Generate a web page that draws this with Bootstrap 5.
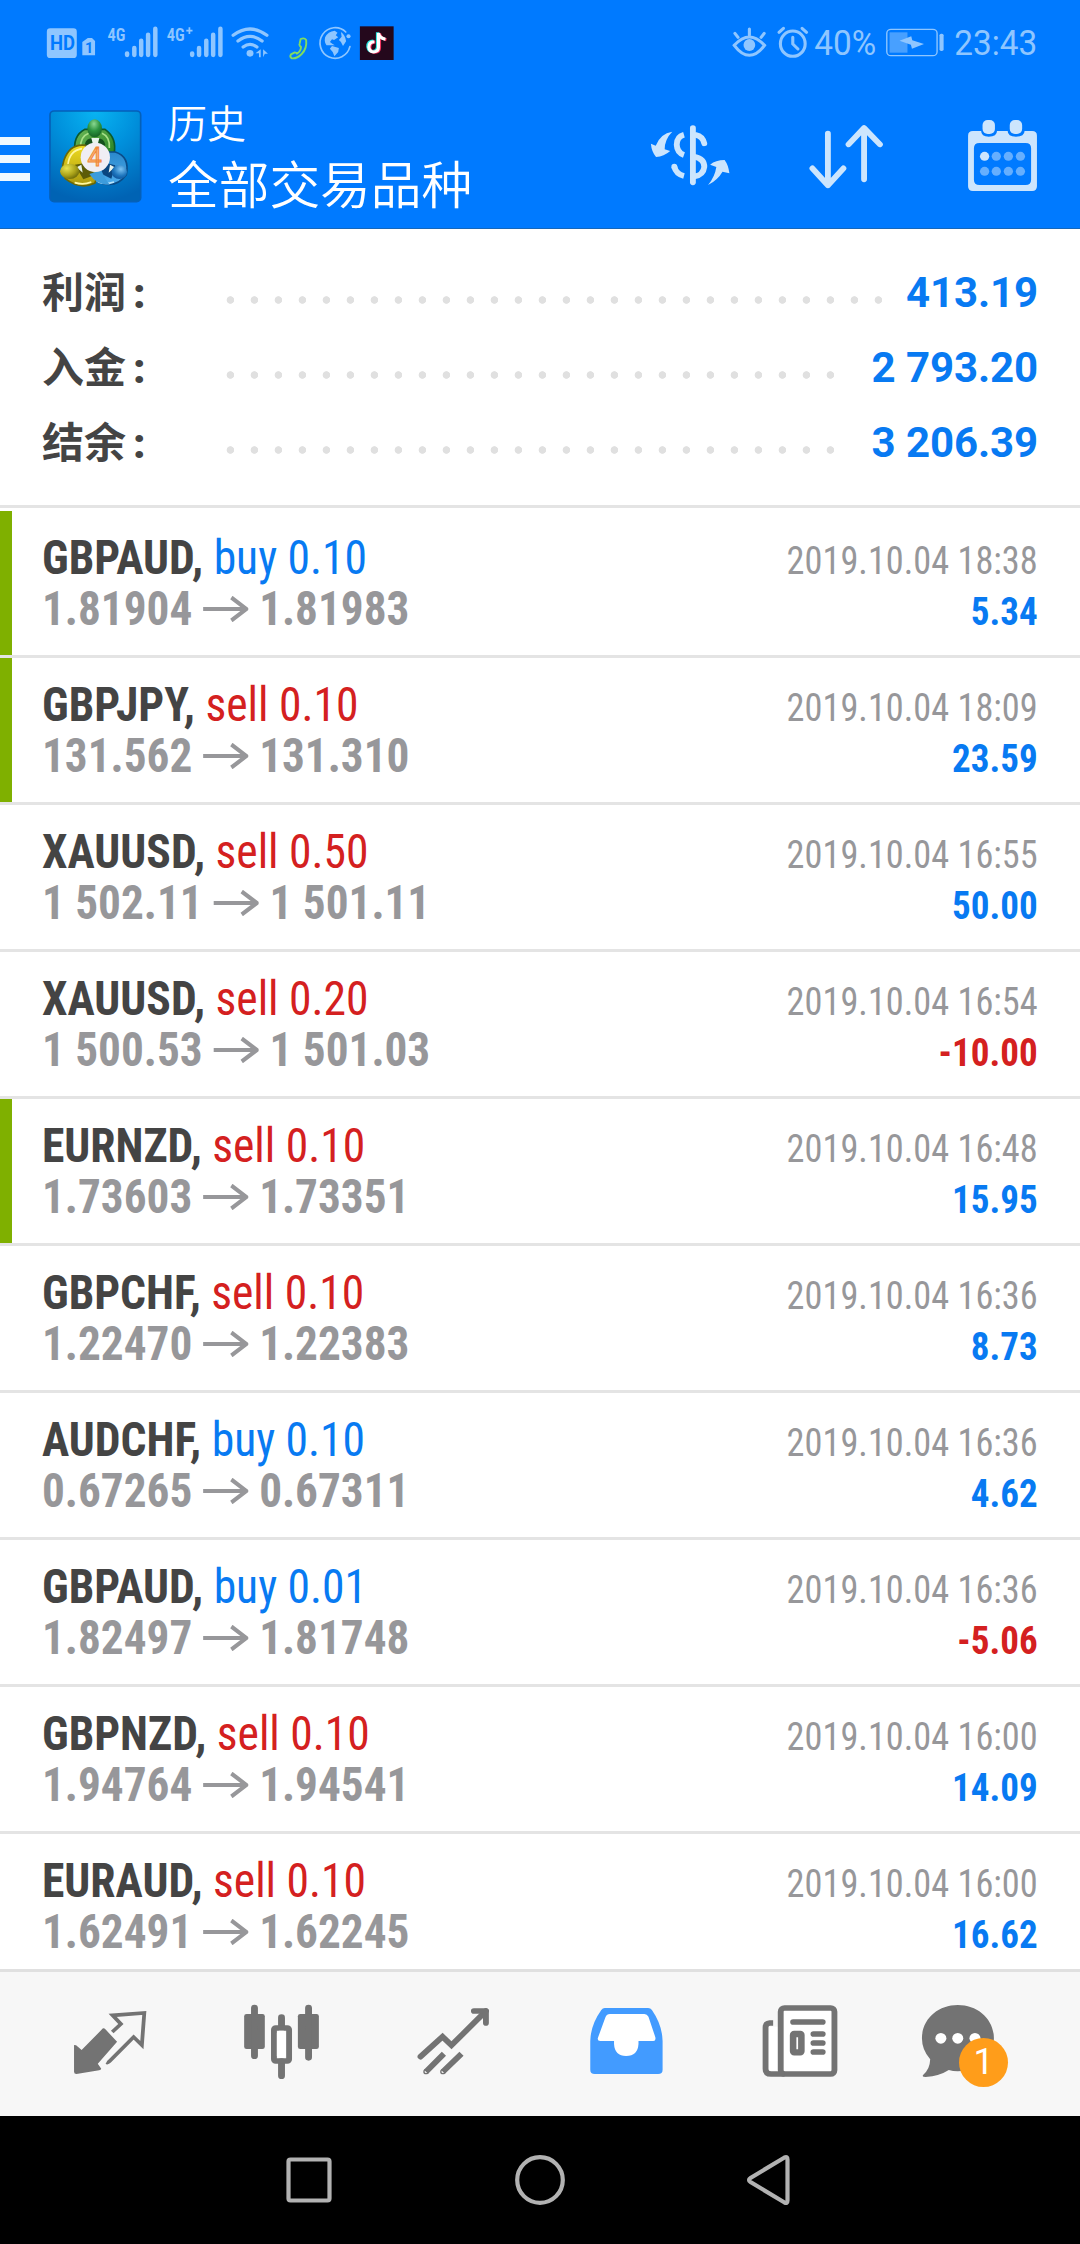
<!DOCTYPE html>
<html lang="zh-CN">
<head>
<meta charset="utf-8">
<meta name="viewport" content="width=device-width, initial-scale=1">
<title>历史</title>
<link rel="stylesheet" href="https://cdn.jsdelivr.net/npm/bootstrap@5.3.0/dist/css/bootstrap.min.css">
<style>
  body { font-family: Roboto, "Noto Sans CJK SC", sans-serif; background: #fff; }
  svg { display: block; flex: none; }
  .phone { width: 1080px; height: 2244px; }

  /* header */
  .topbar { background: #007aff; height: 229px; border-bottom: 1px solid #1667ba; }
  .statusbar { height: 72px; color: #8fc6ff; }
  .titles { color: #fff; font-family: "Noto Sans CJK SC", sans-serif; font-weight: 350; margin-left: 23px; padding-top: 26px; }
  .title-small { font-size: 39px; line-height: 46px; }
  .title-big { font-size: 50.700px; line-height: 60px; padding-top: 8px; }

  /* account summary */
  .summary { padding: 26px 42px 25px; border-bottom: 3px solid #e4e4e4; }
  .sum-line { height: 75px; line-height: 75px; font-size: 42px; font-weight: 700; }
  .sum-label { color: #444; width: 176px; font-family: "Noto Sans CJK SC", sans-serif; height: 77px; margin-top: -5px; }
  .sum-colon { font-family: Roboto, sans-serif; font-weight: 900; margin-left: 7px; }
  .sum-value { color: #087af2; letter-spacing: -.1px; }
  .dots { height: 8px; margin-top: 15px; width: calc(var(--n) * 24px);
          background: radial-gradient(circle at 12.4px 4px, #e0e0e0 3.4px, transparent 4.1px) 0 0 / 24px 8px; }

  /* deals */
  .deals { font-family: "Roboto Condensed", Roboto, sans-serif; padding-top: 3px; }
  .deal { height: 147px; padding: 21px 42px 0; position: relative; border-bottom: 3px solid #e4e4e4; }
  .deal.closed-tp::before { content: ""; position: absolute; left: 0; top: 0; width: 12px; height: 144px; background: #7fb000; }
  .deal-main { font-size: 48px; line-height: 51px; }
  .deal-main > div { transform: scaleX(.949); transform-origin: left; }
  .deal-main > .prices { transform: scaleX(.942); }
  .sym { color: #444; font-weight: 700; }
  .prices { color: #97979a; font-weight: 700; }
  .prices svg { margin: 0 12px 0 11px; }
  .deal-side { font-size: 39px; line-height: 51px; padding-top: 4px; color: #97979a; }
  .deal-side > div { transform: scaleX(.931); transform-origin: right; }
  .deal-side > .side-val { font-weight: 700; transform: scaleX(.95); }
  .c-buy { color: #087af2; }
  .c-sell { color: #d42020; }

  /* bottom */
  .tabs { height: 147px; background: #f7f7f7; border-top: 3px solid #e0e0e0; color: #737373; }
  .tabs a { color: inherit; width: 180px; }
  .count { position: absolute; left: 59px; top: 66px; width: 49px; height: 49px; line-height: 49px; font-size: 36px;
           background: #ff9d1a; border-radius: 50%; color: #fff; text-align: center; }
  .sysnav { height: 128px; background: #000; }
</style>
</head>
<body>
<div class="phone d-flex flex-column overflow-hidden">

  <header class="topbar flex-shrink-0">
    <div class="statusbar d-flex">
      <svg width="540" height="72" viewBox="0 0 1568 216" preserveAspectRatio="none" fill="currentColor" stroke="none">
        <!-- HD and SIM -->
        <rect x="136" y="85" width="87" height="89" rx="10"/>
        <text transform="translate(145 151) scale(2.9 3)" font-size="20.5" font-weight="700" textLength="25" lengthAdjust="spacingAndGlyphs" fill="#007aff">HD</text>
        <path d="M239 126l16-12h12l9 9v43h-37z"/>
        <text transform="translate(247 160) scale(2.9 3)" font-size="14.5" font-weight="700" fill="#007aff">1</text>
        <!-- signal bars -->
        <text transform="translate(312 122) scale(2.9 3)" font-size="19" font-weight="600" font-family="Roboto Condensed" textLength="18" lengthAdjust="spacingAndGlyphs">4G</text>
        <g stroke="currentColor" stroke-width="13" stroke-linecap="round">
          <path d="M369 160v5M390 144v21M410 122v43M430 104v61M451 86v79"/>
          <path d="M558 160v5M578 144v21M599 122v43M619 104v61M640 86v79"/>
        </g>
        <text transform="translate(484 122) scale(2.9 3)" font-size="19" font-weight="600" font-family="Roboto Condensed" textLength="18" lengthAdjust="spacingAndGlyphs">4G</text>
        <path d="M541 92h18M550 82v20" stroke="currentColor" stroke-width="5"/>
        <!-- wifi -->
        <g fill="none" stroke="currentColor" stroke-width="9.500" stroke-linecap="round">
          <path d="M677 106Q726 68 775 106M691 123Q726 95 761 123M706 141Q726 125 746 141"/>
        </g>
        <ellipse cx="726" cy="160" rx="10" ry="10"/>
        <path d="M757 148v24h-5v-12h-10zM764 172v-24l14 13h-9z"/>
        <!-- phone -->
        <path d="M873 117Q884 112 889 120Q892 145 876 162Q862 177 847 175Q840 170 845 163L856 157Q862 158 862 161Q874 154 874 141L871 138Q868 134 870 131Z" fill="none" stroke="#7fdc62" stroke-width="5.500" stroke-linejoin="round"/>
        <!-- globe -->
        <path d="M1004 96A44 46 0 1 0 1016 140" fill="none" stroke="currentColor" stroke-width="5" stroke-linecap="round"/>
        <circle cx="1012" cy="109" r="6"/>
        <path d="M944 112Q952 94 972 92L980 98L975 106L982 112L970 120L964 118L958 126L966 132L972 136H948Q941 126 944 112ZM964 138L984 144L982 156L971 169L966 156L958 146ZM990 96Q1003 106 1005 124L996 138L990 126L984 120L992 110Z"/>
        <!-- music note app -->
        <rect x="1045" y="79" width="98" height="101" fill="#24081c"/>
        <g fill="none" stroke-width="9">
          <path d="M1086 124Q1070 124 1070 141Q1072 155 1084 155Q1098 154 1098 141V98Q1100 113 1118 117" stroke="#25e8e0" transform="translate(-2 -1)"/>
          <path d="M1086 124Q1070 124 1070 141Q1072 155 1084 155Q1098 154 1098 141V98Q1100 113 1118 117" stroke="#f2315d" transform="translate(4 2)"/>
          <path d="M1086 124Q1070 124 1070 141Q1072 155 1084 155Q1098 154 1098 141V98Q1100 113 1118 117" stroke="#fff" transform="translate(1 1)"/>
        </g>
      </svg>
      <svg width="540" height="72" viewBox="0 0 1568 216" preserveAspectRatio="none" fill="currentColor">
        <!-- eye -->
        <g fill="none" stroke="currentColor" stroke-width="9" stroke-linecap="round">
          <path d="M564 136Q608 86 652 136Q608 196 564 136ZM608 87v18M566 100l9 12M651 100l-9 12"/>
        </g>
        <ellipse cx="608" cy="135" rx="17" ry="18"/>
        <!-- alarm -->
        <g fill="none" stroke="currentColor" stroke-width="9" stroke-linecap="round">
          <ellipse cx="734" cy="131" rx="36" ry="38"/>
          <path d="M734 112v20l15 15M694 97l13-12M774 97l-13-12"/>
        </g>
        <text transform="translate(796 164.500) scale(2.904 3)" font-size="34.500" textLength="62" lengthAdjust="spacingAndGlyphs">40%</text>
        <!-- battery -->
        <rect x="1007" y="88" width="146" height="79" rx="12" fill="none" stroke="currentColor" stroke-width="4"/>
        <rect x="1015" y="97" width="52" height="61" fill="#48a0ff"/>
        <path d="M1044 122l34-13 3 12 34 11-35 14-3-12z"/>
        <rect x="1160" y="101" width="12" height="52" rx="5"/>
        <text transform="translate(1203 164.500) scale(2.904 3)" font-size="34.500" textLength="83" lengthAdjust="spacingAndGlyphs">23:43</text>
      </svg>
    </div>

    <div class="d-flex">
      <svg width="30" height="156" viewBox="0 72 30 156" fill="#eef8ff"><path d="M0 137h30v8H0zM0 155h30v8H0zM0 173h30v8H0z"/></svg>
      <svg width="115" height="156" viewBox="0 -6 345 468">
        <defs>
          <radialGradient id="bg" cx=".5" cy="0" r="1"><stop offset="0" stop-color="#08b4f2"/><stop offset=".45" stop-color="#0090dc"/><stop offset="1" stop-color="#0063b4"/></radialGradient>
          <linearGradient id="gr" x1="0" y1="0" x2="1" y2="1"><stop offset="0" stop-color="#6cb858"/><stop offset="1" stop-color="#1d7a1c"/></linearGradient>
          <linearGradient id="ye" x1="0" y1="0" x2="0" y2="1"><stop offset="0" stop-color="#f0dc20"/><stop offset="1" stop-color="#a89810"/></linearGradient>
          <linearGradient id="bl" x1="0" y1="0" x2="0" y2="1"><stop offset="0" stop-color="#2a88cc"/><stop offset="1" stop-color="#4cacec"/></linearGradient>
          <radialGradient id="hg" cx=".45" cy=".25" r=".8"><stop offset="0" stop-color="#8ad890"/><stop offset=".5" stop-color="#2c9440"/><stop offset="1" stop-color="#125c20"/></radialGradient>
          <radialGradient id="hy" cx=".35" cy=".3" r=".8"><stop offset="0" stop-color="#e8e450"/><stop offset=".6" stop-color="#a8a018"/><stop offset="1" stop-color="#606008"/></radialGradient>
          <radialGradient id="hb" cx=".6" cy=".3" r=".8"><stop offset="0" stop-color="#7cc4f4"/><stop offset=".6" stop-color="#1c74bc"/><stop offset="1" stop-color="#0c4c94"/></radialGradient>
        </defs>
        <g transform="translate(-30 76)">
          <rect x="90" y="35" width="272" height="272" rx="12" fill="url(#bg)" stroke="#0560b8" stroke-width="5"/>
          <g transform="translate(30 0)">
            <path d="M136 164Q126 110 165 90H225Q262 116 252 164L228 190H160Z" fill="url(#gr)" stroke="#0c5a2c" stroke-width="5"/>
            <path d="M152 146Q150 112 176 102M238 146Q240 112 216 102" fill="none" stroke="#a8e088" stroke-width="5"/>
            <path d="M164 136Q170 112 194 118Q220 112 226 136L218 150H172Z" fill="#14501c"/>
            <path d="M208 158H256Q300 172 289 226Q258 268 210 250L172 222Z" fill="url(#bl)" stroke="#0a4c88" stroke-width="5"/>
            <path d="M186 232Q212 262 252 248" fill="none" stroke="#b8e4fc" stroke-width="5"/>
            <path d="M166 138Q120 132 102 182Q92 210 106 238Q148 272 194 252L210 214Z" fill="url(#ye)" stroke="#6a6808" stroke-width="5"/>
            <path d="M114 196Q118 154 156 148M134 250Q160 258 184 248" fill="none" stroke="#fff8a0" stroke-width="5"/>
            <path d="M134 196L170 190L196 226L160 240Z" fill="#5c5c08"/>
            <path d="M256 198L226 190L208 220L244 238Z" fill="#0a4680"/>
            <path d="M178 224Q200 258 240 256Q224 240 214 212Z" fill="#3c9cdc"/>
            <path d="M184 116H208L204 132H188ZM140 204l14-8 4 24ZM254 204l-14-8-4 24Z" fill="#e8f4ec"/>
            <ellipse cx="194" cy="87" rx="22" ry="27" fill="url(#hg)"/>
            <ellipse cx="119" cy="216" rx="29" ry="23" fill="url(#hy)"/>
            <ellipse cx="268" cy="218" rx="23" ry="21" fill="url(#hb)"/>
            <circle cx="196" cy="174" r="44" fill="#f0eef4"/>
            <text x="194" y="201" font-size="76" text-anchor="middle" font-family="Roboto" font-weight="400" fill="#fdb880" stroke="#f08838" stroke-width="3">4</text>
          </g>
        </g>
      </svg>
      <div class="titles flex-grow-1">
        <div class="title-small">历史</div>
        <div class="title-big">全部交易品种</div>
      </div>
      <svg width="540" height="156" viewBox="0 216 1568 468" preserveAspectRatio="none" fill="#cce5fd">
        <!-- currency refresh -->
        <g fill="none" stroke="#cce5fd" stroke-width="17" stroke-linecap="round">
          <path d="M444 384V547"/>
          <path d="M418 404Q397 410 397 434Q398 458 418 465M390 500Q395 522 418 528" stroke-linecap="butt"/>
          <path d="M390 500v1M453 405Q472 409 477 430"/>
          <path d="M448 470Q478 476 477 501Q474 526 448 529" stroke-linecap="butt"/>
        </g>
        <path d="M384 395Q350 400 336 437L322 431Q324 455 337 471Q360 470 378 453L362 448Q362 418 384 395Z"/>
        <path d="M488 555Q516 540 530 515L550 520Q547 495 536 480Q510 480 494 494L512 501Q508 530 488 555Z"/>
        <!-- sort arrows -->
        <path d="M836 401V556M791 505L836 556L881 505M941 538V384M896 433L941 384L987 433" fill="none" stroke="#cce5fd" stroke-width="17" stroke-linecap="round" stroke-linejoin="round"/>
        <!-- calendar -->
        <path fill-rule="evenodd" d="M1257 393H1281Q1281 410 1303 410Q1327 410 1327 393H1358Q1358 410 1382 410Q1407 410 1407 393H1429Q1443 393 1443 407V559Q1443 573 1429 573H1257Q1243 573 1243 559V407Q1243 393 1257 393ZM1276 429Q1260 429 1260 445V539Q1260 555 1276 555H1410Q1426 555 1426 539V445Q1426 429 1410 429Z"/>
        <rect x="1285" y="360" width="36" height="42" rx="15"/><rect x="1364" y="360" width="36" height="42" rx="15"/>
        <circle cx="1291" cy="469" r="13.500"/>
        <g fill="#66affe"><circle cx="1325" cy="469" r="13.500"/><circle cx="1360" cy="469" r="13.500"/><circle cx="1395" cy="469" r="13.500"/><circle cx="1291" cy="514" r="13.500"/><circle cx="1325" cy="514" r="13.500"/><circle cx="1360" cy="514" r="13.500"/><circle cx="1395" cy="514" r="13.500"/></g>
      </svg>
    </div>
  </header>

  <section class="summary flex-shrink-0">
    <div class="sum-line d-flex align-items-center"><span class="sum-label">利润<span class="sum-colon">:</span></span><span class="dots" style="--n:28"></span><span class="sum-value ms-auto">413.19</span></div>
    <div class="sum-line d-flex align-items-center"><span class="sum-label">入金<span class="sum-colon">:</span></span><span class="dots" style="--n:26"></span><span class="sum-value ms-auto">2 793.20</span></div>
    <div class="sum-line d-flex align-items-center"><span class="sum-label">结余<span class="sum-colon">:</span></span><span class="dots" style="--n:26"></span><span class="sum-value ms-auto">3 206.39</span></div>
  </section>

  <svg width="0" height="0" class="position-absolute"><symbol id="arrow" viewBox="0 0 48 26"><path d="M0 13H46M30 1.500L46 13L30 24.500" fill="none" stroke="#97979a" stroke-width="4.200"/></symbol></svg>

  <main class="deals flex-grow-1 overflow-hidden">
    <div class="deal closed-tp d-flex justify-content-between">
      <div class="deal-main"><div><span class="sym">GBPAUD,</span> <span class="c-buy">buy 0.10</span></div><div class="prices d-flex align-items-center">1.81904<svg width="48" height="26"><use href="#arrow"/></svg>1.81983</div></div>
      <div class="deal-side text-end"><div>2019.10.04 18:38</div><div class="side-val c-buy">5.34</div></div>
    </div>
    <div class="deal closed-tp d-flex justify-content-between">
      <div class="deal-main"><div><span class="sym">GBPJPY,</span> <span class="c-sell">sell 0.10</span></div><div class="prices d-flex align-items-center">131.562<svg width="48" height="26"><use href="#arrow"/></svg>131.310</div></div>
      <div class="deal-side text-end"><div>2019.10.04 18:09</div><div class="side-val c-buy">23.59</div></div>
    </div>
    <div class="deal d-flex justify-content-between">
      <div class="deal-main"><div><span class="sym">XAUUSD,</span> <span class="c-sell">sell 0.50</span></div><div class="prices d-flex align-items-center">1 502.11<svg width="48" height="26"><use href="#arrow"/></svg>1 501.11</div></div>
      <div class="deal-side text-end"><div>2019.10.04 16:55</div><div class="side-val c-buy">50.00</div></div>
    </div>
    <div class="deal d-flex justify-content-between">
      <div class="deal-main"><div><span class="sym">XAUUSD,</span> <span class="c-sell">sell 0.20</span></div><div class="prices d-flex align-items-center">1 500.53<svg width="48" height="26"><use href="#arrow"/></svg>1 501.03</div></div>
      <div class="deal-side text-end"><div>2019.10.04 16:54</div><div class="side-val c-sell">-10.00</div></div>
    </div>
    <div class="deal closed-tp d-flex justify-content-between">
      <div class="deal-main"><div><span class="sym">EURNZD,</span> <span class="c-sell">sell 0.10</span></div><div class="prices d-flex align-items-center">1.73603<svg width="48" height="26"><use href="#arrow"/></svg>1.73351</div></div>
      <div class="deal-side text-end"><div>2019.10.04 16:48</div><div class="side-val c-buy">15.95</div></div>
    </div>
    <div class="deal d-flex justify-content-between">
      <div class="deal-main"><div><span class="sym">GBPCHF,</span> <span class="c-sell">sell 0.10</span></div><div class="prices d-flex align-items-center">1.22470<svg width="48" height="26"><use href="#arrow"/></svg>1.22383</div></div>
      <div class="deal-side text-end"><div>2019.10.04 16:36</div><div class="side-val c-buy">8.73</div></div>
    </div>
    <div class="deal d-flex justify-content-between">
      <div class="deal-main"><div><span class="sym">AUDCHF,</span> <span class="c-buy">buy 0.10</span></div><div class="prices d-flex align-items-center">0.67265<svg width="48" height="26"><use href="#arrow"/></svg>0.67311</div></div>
      <div class="deal-side text-end"><div>2019.10.04 16:36</div><div class="side-val c-buy">4.62</div></div>
    </div>
    <div class="deal d-flex justify-content-between">
      <div class="deal-main"><div><span class="sym">GBPAUD,</span> <span class="c-buy">buy 0.01</span></div><div class="prices d-flex align-items-center">1.82497<svg width="48" height="26"><use href="#arrow"/></svg>1.81748</div></div>
      <div class="deal-side text-end"><div>2019.10.04 16:36</div><div class="side-val c-sell">-5.06</div></div>
    </div>
    <div class="deal d-flex justify-content-between">
      <div class="deal-main"><div><span class="sym">GBPNZD,</span> <span class="c-sell">sell 0.10</span></div><div class="prices d-flex align-items-center">1.94764<svg width="48" height="26"><use href="#arrow"/></svg>1.94541</div></div>
      <div class="deal-side text-end"><div>2019.10.04 16:00</div><div class="side-val c-buy">14.09</div></div>
    </div>
    <div class="deal d-flex justify-content-between">
      <div class="deal-main"><div><span class="sym">EURAUD,</span> <span class="c-sell">sell 0.10</span></div><div class="prices d-flex align-items-center">1.62491<svg width="48" height="26"><use href="#arrow"/></svg>1.62245</div></div>
      <div class="deal-side text-end"><div>2019.10.04 16:00</div><div class="side-val c-buy">16.62</div></div>
    </div>
  </main>

  <nav class="tabs d-flex flex-shrink-0">
    <a href="#" aria-label="行情"><svg width="180" height="144" viewBox="0 96 522.700 432" preserveAspectRatio="none" fill="currentColor">
      <path d="M299 265Q303 264 306 268L340 305L284 371L294 386Q293 390 288 391L222 402Q215 402 215 395V315L221 316L237 330Z"/>
      <path d="M326 276L351 252L327 226L419 219L412 315L388 291L318 364Q313 369 309 367" fill="none" stroke="currentColor" stroke-width="11"/>
    </svg></a>
    <a href="#" aria-label="图表"><svg width="180" height="144" viewBox="522.700 96 522.700 432" preserveAspectRatio="none" fill="currentColor">
      <rect x="709" y="222" width="60" height="105" rx="7"/><rect x="865" y="222" width="61" height="105" rx="7"/>
      <path d="M739 204V347M896 204V352M817.500 233V260M817.500 365V407" stroke="currentColor" stroke-width="20" stroke-linecap="round"/>
      <rect x="795.500" y="264" width="44" height="99" rx="5" fill="none" stroke="currentColor" stroke-width="17"/>
      <rect x="804" y="272" width="26" height="82" rx="7" fill="#fff"/>
    </svg></a>
    <a href="#" aria-label="交易"><svg width="180" height="144" viewBox="1045.300 96 522.700 432" preserveAspectRatio="none" fill="none" stroke="currentColor" stroke-width="17">
      <path d="M1221 350L1285 290L1311 316L1411 213" stroke-linecap="round"/>
      <path d="M1376 213H1411V249" stroke-linecap="round" stroke-linejoin="round"/>
      <path d="M1237 395L1289 341M1286 395L1340 341"/><circle cx="1237" cy="395" r="2" stroke-width="12"/><circle cx="1286" cy="395" r="2" stroke-width="12"/>
    </svg></a>
    <a href="#" aria-label="历史"><svg width="180" height="144" viewBox="0 96 522.700 432" preserveAspectRatio="none">
      <path fill="#429bff" d="M188 204H314Q321 204 325 210Q355 255 356 303V389Q356 402 343 402H159Q146 402 146 389V303Q147 255 178 210Q182 204 188 204Z"/>
      <path fill="#fff" d="M203 222H303Q311 222 315 230L335 292Q337 303 329 303H286V312Q284 348 250 348Q217 348 215 312V303H175Q166 303 168 294L190 232Q194 222 203 222Z"/>
    </svg></a>
    <a href="#" aria-label="新闻"><svg width="180" height="144" viewBox="522.700 96 522.700 432" preserveAspectRatio="none" fill="none" stroke="currentColor" stroke-width="17">
      <path d="M655 260V395H700V260Z" fill="#fff" stroke="none"/>
      <rect x="699" y="204" width="156" height="198" rx="11" fill="#fff"/>
      <path d="M677 249H667Q655 250 655 262V386Q655 402 671 402H710"/>
      <path d="M735 246H821M794 282H821M794 309H821M794 336H821" stroke-linecap="round"/>
      <rect x="735" y="282" width="24" height="55" rx="3" stroke-width="19"/>
    </svg></a>
    <a href="#" aria-label="消息" class="position-relative"><svg width="180" height="144" viewBox="1045.300 96 522.700 432" preserveAspectRatio="none" fill="currentColor">
      <path d="M1213 195C1272 195 1318 238 1318 295C1318 352 1274 394 1213 394Q1199 394 1187 390Q1160 408 1120 411Q1107 411 1113 404Q1132 388 1133 358Q1109 330 1109 295C1109 238 1155 195 1213 195Z"/>
      <g fill="#fff"><circle cx="1164" cy="295" r="16"/><circle cx="1213" cy="295" r="16"/><circle cx="1263" cy="295" r="16"/></g>
    </svg><span class="count">1</span></a>
  </nav>

  <div class="sysnav d-flex flex-shrink-0">
    <svg width="1080" height="128" viewBox="0 2116 1080 128" fill="none" stroke="#b2b2b2" stroke-width="4.200">
      <rect x="288.500" y="2159.500" width="41" height="41" rx="2"/>
      <circle cx="540" cy="2180" r="22.800"/>
      <path d="M787.500 2159.500Q787.500 2156 784.500 2157.500L750.500 2178Q747.500 2180 750.500 2182L784.500 2202.500Q787.500 2204 787.500 2200.500Z"/>
    </svg>
  </div>
</div>
<script src="https://cdn.jsdelivr.net/npm/bootstrap@5.3.0/dist/js/bootstrap.bundle.min.js"></script>
</body>
</html>
